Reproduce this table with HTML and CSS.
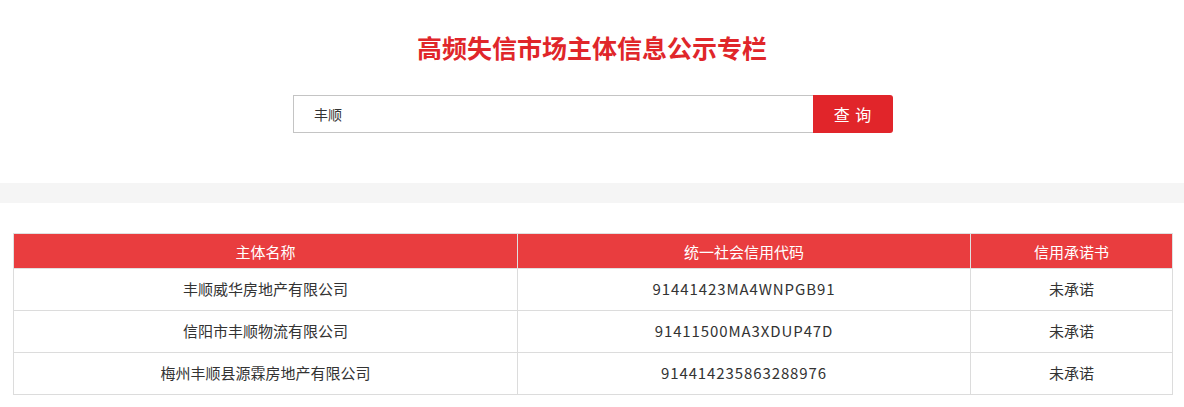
FILE: index.html
```html
<!DOCTYPE html>
<html lang="zh-CN">
<head>
<meta charset="utf-8">
<title>高频失信市场主体信息公示专栏</title>
<link rel="stylesheet" href="styles.css">
</head>
<body>
<div class="top">
  <h1 class="title">高频失信市场主体信息公示专栏</h1>
  <form class="search">
    <input class="search-input" type="text" value="丰顺">
    <button class="search-btn" type="button">查 询</button>
  </form>
</div>
<div class="band"></div>
<div class="list">
  <table class="grid">
    <colgroup>
      <col class="c1"><col class="c2"><col class="c3">
    </colgroup>
    <thead>
      <tr><th>主体名称</th><th>统一社会信用代码</th><th>信用承诺书</th></tr>
    </thead>
    <tbody>
      <tr><td>丰顺威华房地产有限公司</td><td class="code">91441423MA4WNPGB91</td><td>未承诺</td></tr>
      <tr><td>信阳市丰顺物流有限公司</td><td class="code">91411500MA3XDUP47D</td><td>未承诺</td></tr>
      <tr><td>梅州丰顺县源霖房地产有限公司</td><td class="code">914414235863288976</td><td>未承诺</td></tr>
    </tbody>
  </table>
</div>
</body>
</html>
```
FILE: styles.css
```css
* { box-sizing: border-box; }
html, body { margin: 0; padding: 0; background: #fff; }
body {
  font-family: "Noto Sans CJK SC", "Noto Sans", sans-serif;
  color: #333;
}
.top { padding-top: 30px; }
.title {
  margin: 0;
  text-align: center;
  font-size: 25px;
  line-height: 34px;
  font-weight: bold;
  color: #e0262a;
}
.search {
  display: flex;
  justify-content: center;
  margin: 31px 0 0;
  padding-left: 2px;
  height: 38px;
}
.search-input {
  width: 520px;
  height: 38px;
  border: 1px solid #c4c4c4;
  border-right: none;
  padding: 0 20px;
  font-family: "Noto Sans CJK SC", sans-serif;
  font-size: 14px;
  color: #333;
  outline: none;
}
.search-btn {
  width: 80px;
  height: 38px;
  border: none;
  border-radius: 0 3px 3px 0;
  background: #e1252a;
  color: #fff;
  font-family: "Noto Sans CJK SC", sans-serif;
  font-size: 16px;
  padding: 0;
  letter-spacing: 1px;
}
.band {
  margin-top: 50px;
  height: 20px;
  background: #f5f5f5;
}
.list { padding: 30px 11px 0 13px; }
.grid {
  width: 100%;
  border-collapse: collapse;
  table-layout: fixed;
  font-size: 15px;
}
.c1 { width: 504px; }
.c2 { width: 453px; }
.grid th, .grid td {
  border: 1px solid #dcdcdc;
  text-align: center;
  padding: 0;
}
.grid th {
  height: 35px;
  background: #e93d3f;
  color: #fff;
  font-weight: normal;
  border-color: #e0e0e0;
}
.grid td { height: 42px; padding-bottom: 2px; color: #333; }
.grid .code { letter-spacing: 0.9px; }
```
